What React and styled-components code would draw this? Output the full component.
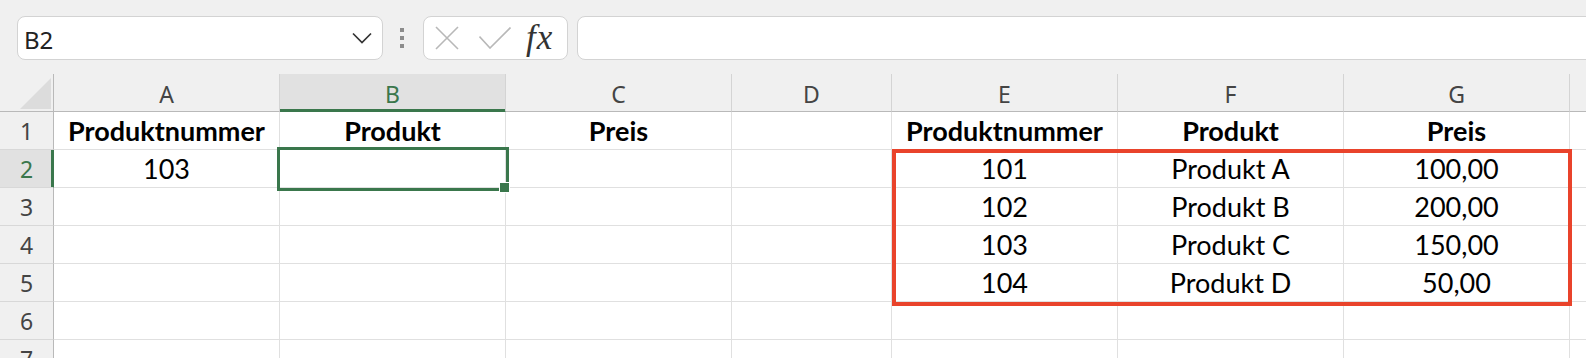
import React from 'react';
import styled, { createGlobalStyle } from 'styled-components';

const GREEN = '#3a774c';
const GRID_LINE = '#e0e0e0';
const HEAD_LINE = '#b9b9b9';
// the H column continues past the right edge, so its letter is not in view
const COLUMNS = ['A', 'B', 'C', 'D', 'E', 'F', 'G', ''];
const TRACKS = '54px 226px 226px 226px 160px 226px 226px 226px 226px';

const ROWS = [
  ['Produktnummer', 'Produkt', 'Preis', '', 'Produktnummer', 'Produkt', 'Preis', ''],
  ['103', '', '', '', '101', 'Produkt A', '100,00', ''],
  ['', '', '', '', '102', 'Produkt B', '200,00', ''],
  ['', '', '', '', '103', 'Produkt C', '150,00', ''],
  ['', '', '', '', '104', 'Produkt D', '50,00', ''],
  ['', '', '', '', '', '', '', ''],
  ['', '', '', '', '', '', '', ''],
];

const GlobalStyle = createGlobalStyle`
  html, body {
    margin: 0;
    padding: 0;
    background: #f0f0f0;
    overflow: hidden;
  }
  #root {
    width: 1586px;
    height: 358px;
    overflow: hidden;
  }
`;

const Toolbar = styled.div`
  display: flex;
  align-items: center;
  height: 74px;
  box-sizing: border-box;
  padding: 16px 0 14px 17px;
  background: #f0f0f0;
`;

const Field = styled.div`
  flex: none;
  height: 44px;
  box-sizing: border-box;
  display: flex;
  align-items: center;
  background: #fff;
  border: 1px solid #d3d3d3;
  border-radius: 8px;
`;

const NameBox = styled(Field)`
  width: 366px;
  justify-content: space-between;
  padding: 3px 10px 0 6px;
  font-family: 'Noto Sans', sans-serif;
  font-size: 24px;
  color: #222;
`;

const Chevron = styled.svg`
  margin-top: -3px;
`;

const Dots = styled.div`
  display: flex;
  flex-direction: column;
  gap: 4px;
  margin: 0 19px 0 17px;

  span {
    width: 4px;
    height: 4px;
    background: #8c8c8c;
  }
`;

const FxBox = styled(Field)`
  width: 145px;
  padding-left: 11px;
`;

const Icon = styled.svg`
  flex: none;
  margin-left: ${(p) => p.$gap || 0}px;
`;

const Fx = styled.span`
  margin: -2px 0 0 15px;
  font-family: 'Liberation Serif', serif;
  font-style: italic;
  font-size: 35px;
  letter-spacing: 1px;
  line-height: 1;
  color: #333;
`;

const FormulaBar = styled(Field)`
  flex: 1;
  margin: 0 -12px 0 9px;
`;

const Grid = styled.div`
  position: relative;
  width: 1586px;
  overflow: hidden;
  background: #fff;
`;

const Row = styled.div`
  display: grid;
  grid-template-columns: ${TRACKS};
  height: 38px;
`;

const Corner = styled.div`
  position: relative;
  background: #f0f0f0;
  border-right: 1px solid ${HEAD_LINE};
  border-bottom: 1px solid ${HEAD_LINE};

  &::after {
    content: '';
    position: absolute;
    left: 20px;
    top: 4px;
    width: 31px;
    height: 31px;
    background: #dcdcdc;
    clip-path: polygon(100% 0, 100% 100%, 0 100%);
  }
`;

const ColHead = styled.div`
  box-sizing: border-box;
  padding-top: 4px;
  line-height: 33px;
  text-align: center;
  font-family: 'Noto Sans', sans-serif;
  font-size: 23px;
  color: ${(p) => (p.$active ? GREEN : '#444')};
  background: ${(p) => (p.$active ? '#e1e1e1' : '#f0f0f0')};
  border-right: 1px solid #d4d4d4;
  border-bottom: 1px solid ${(p) => (p.$active ? GREEN : HEAD_LINE)};
  box-shadow: ${(p) => (p.$active ? `inset 0 -2px 0 ${GREEN}` : 'none')};
`;

const RowHead = styled.div`
  box-sizing: border-box;
  padding-top: 2px;
  line-height: 35px;
  text-align: center;
  font-family: 'Noto Sans', sans-serif;
  font-size: 23px;
  color: ${(p) => (p.$active ? GREEN : '#444')};
  background: ${(p) => (p.$active ? '#e1e1e1' : '#f0f0f0')};
  border-right: 1px solid ${(p) => (p.$active ? GREEN : HEAD_LINE)};
  border-bottom: 1px solid #d8d8d8;
  box-shadow: ${(p) => (p.$active ? `inset -2px 0 0 ${GREEN}` : 'none')};
`;

const Cell = styled.div`
  box-sizing: border-box;
  padding-top: 1px;
  line-height: 35px;
  text-align: center;
  white-space: nowrap;
  font-family: Lato, 'Liberation Sans', sans-serif;
  font-size: 27px;
  font-weight: ${(p) => (p.$bold ? 700 : 400)};
  color: #000;
  background: #fff;
  border-right: 1px solid ${GRID_LINE};
  border-bottom: 1px solid ${GRID_LINE};

  ${(p) =>
    p.$selected &&
    `
    position: relative;
    z-index: 2;
    outline: 3px solid ${GREEN};

    &::after {
      content: '';
      position: absolute;
      left: 219px;
      top: 32px;
      width: 11px;
      height: 11px;
      box-sizing: border-box;
      background: ${GREEN};
      border: 1px solid #fff;
    }
  `}
`;

const Highlight = styled.div`
  position: absolute;
  left: 892px;
  top: 75px;
  width: 680px;
  height: 157px;
  box-sizing: border-box;
  border: 4px solid #e9432b;
  pointer-events: none;
  z-index: 3;
`;

const App = () => (
  <>
    <GlobalStyle />
    <Toolbar>
      <NameBox>
        <span>B2</span>
        <Chevron width="20" height="12" viewBox="0 0 20 12">
          <path d="M1 1.5 L10 10.5 L19 1.5" fill="none" stroke="#333" strokeWidth="1.7" />
        </Chevron>
      </NameBox>
      <Dots>
        <span />
        <span />
        <span />
      </Dots>
      <FxBox>
        <Icon width="24" height="24" viewBox="0 0 24 24">
          <path d="M1 1 L23 23 M23 1 L1 23" stroke="#b8b8b8" strokeWidth="1.6" />
        </Icon>
        <Icon $gap={20} width="32" height="22" viewBox="0 0 32 22">
          <path d="M0.5 9.5 L11 21 L31.5 0.5" fill="none" stroke="#b8b8b8" strokeWidth="1.6" />
        </Icon>
        <Fx>fx</Fx>
      </FxBox>
      <FormulaBar />
    </Toolbar>
    <Grid>
      <Row>
        <Corner />
        {COLUMNS.map((c, i) => (
          <ColHead key={i} $active={c === 'B'}>
            {c}
          </ColHead>
        ))}
      </Row>
      {ROWS.map((cells, r) => (
        <Row key={r}>
          <RowHead $active={r === 1}>{r + 1}</RowHead>
          {cells.map((v, c) => (
            <Cell key={c} $bold={r === 0} $selected={r === 1 && c === 1}>
              {v}
            </Cell>
          ))}
        </Row>
      ))}
      <Highlight />
    </Grid>
  </>
);

export default App;
